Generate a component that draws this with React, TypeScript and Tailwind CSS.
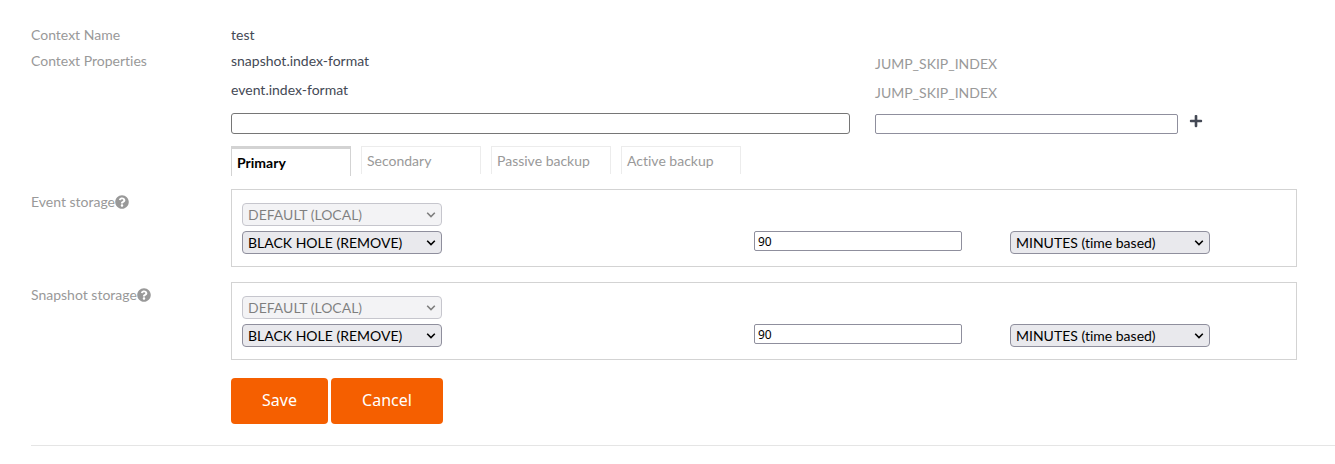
import { useState } from "react";
import { FaPlus, FaQuestionCircle } from "react-icons/fa";

const tabs = ["Primary", "Secondary", "Passive backup", "Active backup"];

const properties = [
  { name: "snapshot.index-format", value: "JUMP_SKIP_INDEX" },
  { name: "event.index-format", value: "JUMP_SKIP_INDEX" },
];

function Select({ label, options, disabled = false }: { label: string; options: string[]; disabled?: boolean }) {
  return (
    <div className={`relative w-50 ${disabled ? "opacity-50" : ""}`}>
      <select
        aria-label={label}
        disabled={disabled}
        className="block h-[23px] w-full appearance-none rounded border border-[#8f8f9d] bg-[#e9e9ed] pr-5 pl-[5px] text-sm leading-5 text-black [font-variant-ligatures:none] disabled:opacity-100"
      >
        {options.map((option) => (
          <option key={option}>{option}</option>
        ))}
      </select>
      <svg
        viewBox="0 0 10 6"
        className="pointer-events-none absolute top-[9px] right-1.5 h-1.5 w-2.5 fill-none stroke-black stroke-[1.6]"
        aria-hidden="true"
      >
        <path d="M1.2 0.8 L5 4.6 L8.8 0.8" />
      </svg>
    </div>
  );
}

function StorageRow({ name }: { name: string }) {
  return (
    <section className="flex pb-[15px]">
      <div className="mt-[3px] flex h-5 w-50 shrink-0 items-center">
        <span>{name}</span>
        <button type="button" aria-label={`Help on ${name.toLowerCase()}`}>
          <FaQuestionCircle size={14} />
        </button>
      </div>
      <div className="grid flex-1 grid-cols-[2fr_1fr_1fr] items-start gap-y-[5px] border border-[#d3d3d3] pt-[13px] pr-[30px] pb-3 pl-2.5">
        <div className="col-span-3">
          <Select label={`${name} location`} options={["DEFAULT (LOCAL)"]} disabled />
        </div>
        <Select label={`${name} next location`} options={["BLACK HOLE (REMOVE)"]} />
        <input
          aria-label={`${name} retention`}
          defaultValue="90"
          className="h-5 w-52 rounded-xs border border-[#8f8f9d] px-[3px] font-['Noto_Sans',sans-serif] text-xs text-black"
        />
        <Select label={`${name} retention unit`} options={["MINUTES (time based)"]} />
      </div>
    </section>
  );
}

export default function App() {
  const [active, setActive] = useState("Primary");

  return (
    <main className="bg-white pt-[25px] pb-[18px] pl-[31px] font-[Lato,sans-serif] text-sm leading-5 text-[#999999] [font-variant-ligatures:none]">
      <form className="border-b border-[#e5e5e5] pb-[21px]" onSubmit={(event) => event.preventDefault()}>
        <div className="pr-[38px]">
          <div className="flex pb-1.5">
            <div className="w-50 shrink-0">Context Name</div>
            <div className="text-[#444955]">test</div>
          </div>

          <div className="flex">
            <div className="w-50 shrink-0">Context Properties</div>
            <div className="grid flex-1 grid-cols-[619fr_303fr_94fr] gap-x-[25px]">
              {properties.map(({ name, value }) => (
                <div key={name} className="col-span-3 grid h-[29px] grid-cols-subgrid">
                  <span className="text-[#444955]">{name}</span>
                  <span className="pt-[3px]">{value}</span>
                </div>
              ))}
              <input
                aria-label="Property name"
                className="mt-1 h-[21px] w-full rounded-[3px] border border-[#767676] px-1 text-[#444955]"
              />
              <input
                aria-label="Property value"
                className="mt-[5px] h-5 w-full rounded-xs border border-[#8f8f9d] px-1 text-[#444955]"
              />
              <button type="button" aria-label="Add property" className="mt-[5px] -ml-3.5 h-3.5 w-3.5 text-[#444955]">
                <FaPlus size={14} />
              </button>
            </div>
          </div>

          <div role="tablist" className="ml-50 flex h-[55px] items-start gap-2.5 pt-3">
            {tabs.map((tab) => (
              <button
                key={tab}
                type="button"
                role="tab"
                aria-selected={tab === active}
                onClick={() => setActive(tab)}
                className={
                  tab === active
                    ? "h-[30px] w-30 border border-t-3 border-b-0 border-[#d3d3d3] px-[5px] text-left leading-5 font-bold text-black"
                    : "h-7 w-30 border border-b-0 border-[#ececec] px-[5px] text-left leading-5"
                }
              >
                {tab}
              </button>
            ))}
          </div>

          <StorageRow name="Event storage" />
          <StorageRow name="Snapshot storage" />

          <div className="mt-[3px] ml-50 flex gap-[3px] font-['Noto_Sans',sans-serif] text-base text-white">
            <button type="submit" className="h-[46px] w-[97px] rounded bg-[#f55f00] pb-0.5">
              Save
            </button>
            <button type="button" className="h-[46px] w-28 rounded bg-[#f55f00] pb-0.5">
              Cancel
            </button>
          </div>
        </div>
      </form>
    </main>
  );
}
